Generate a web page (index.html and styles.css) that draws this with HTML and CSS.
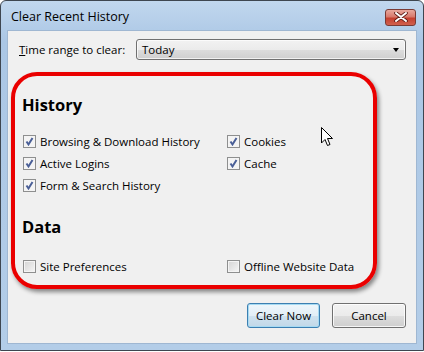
FILE: index.html
```html
<!DOCTYPE html>
<html>
    <head>
        <title>Clear Recent History</title>
        <link rel="stylesheet" href="styles.css">
    </head>
    <body>
        <div class="window">
            <div class="titlebar">
                <span class="title">Clear Recent History</span>
                <span class="close">
                    <svg width="14" height="10" viewBox="0 0 14 10">
                        <path d="M2 1 L12 9 M12 1 L2 9" stroke="#5b1a14" stroke-width="3.6" stroke-linecap="round"/>
                        <path d="M2 1 L12 9 M12 1 L2 9" stroke="#ffffff" stroke-width="2" stroke-linecap="round"/>
                    </svg>
                </span>
            </div>

            <div class="client">
                <div class="range">
                    <label class="range-label"><u>T</u>ime range to clear:</label>
                    <div class="select">
                        <span>Today</span>
                        <span class="arrow"></span>
                    </div>
                </div>

                <div class="marked">
                    <h2>History</h2>
                    <div class="options">
                        <div class="option"><span class="box checked"></span>Browsing &amp; Download History</div>
                        <div class="option"><span class="box checked"></span>Cookies</div>
                        <div class="option"><span class="box checked"></span>Active Logins</div>
                        <div class="option"><span class="box checked"></span>Cache</div>
                        <div class="option"><span class="box checked"></span>Form &amp; Search History</div>
                    </div>

                    <h2 class="data">Data</h2>
                    <div class="options data-options">
                        <div class="option"><span class="box"></span>Site Preferences</div>
                        <div class="option"><span class="box"></span>Offline Website Data</div>
                    </div>
                </div>

                <div class="buttons">
                    <button class="default">Clear Now</button>
                    <button>Cancel</button>
                </div>

                <svg class="cursor" width="13" height="20" viewBox="0 0 13 20">
                    <path d="M0.5 0.5 L0.5 16 L4 12.5 L6.5 18.5 L9 17.5 L6.5 11.5 L11.5 11.5 Z" fill="#ffffff" stroke="#000000" stroke-width="1" stroke-linejoin="miter"/>
                </svg>
            </div>
        </div>
    </body>
</html>
```

FILE: styles.css
```css
html {
    background: #ffffff;
}

body {
    margin: 0;
    font-family: 'Open Sans', 'Noto Sans', sans-serif;
    font-size: 11.5px;
    color: #000000;
}

.window {
    width: 424px;
    height: 351px;
    box-sizing: border-box;
    border: 1px solid #3e4650;
    border-radius: 6px 6px 0 0;
    background: linear-gradient(#c1d7ee, #abc7e5 40px, #b3cde8);
    padding: 0 6px 6px 6px;
    display: flex;
    flex-direction: column;
}

.titlebar {
    height: 29px;
    display: flex;
    align-items: center;
    justify-content: space-between;
    padding: 0 0 0 4px;
}

.title {
    font-size: 12.5px;
    color: #000000;
    padding-top: 2px;
}

.close {
    width: 29px;
    height: 15px;
    border: 1px solid #7a3a34;
    border-radius: 3px;
    background: linear-gradient(#e8a89d, #d87a6d 45%, #c5402f 55%, #d0604e);
    display: flex;
    align-items: center;
    justify-content: center;
    margin-top: 3px;
    margin-right: 1px;
}

.client {
    flex: 1;
    position: relative;
    background: #f0f0f0;
    border: 1px solid #9fb7d2;
    display: flex;
    flex-direction: column;
}

.range {
    display: flex;
    align-items: center;
    margin: 8px 10px 0 11px;
}

.range-label {
    width: 117px;
}

.select {
    flex: 1;
    height: 19px;
    border: 1px solid #707070;
    border-radius: 3px;
    background: linear-gradient(#f2f2f2, #ebebeb 50%, #dddddd 51%, #cfcfcf);
    box-shadow: inset 0 0 0 1px rgba(255, 255, 255, 0.7);
    display: flex;
    align-items: center;
    justify-content: space-between;
    padding: 0 6px 0 5px;
}

.arrow {
    width: 0;
    height: 0;
    border-left: 3.5px solid transparent;
    border-right: 3.5px solid transparent;
    border-top: 4px solid #000000;
}

.marked {
    box-sizing: border-box;
    margin: 12px 0 0 3px;
    width: 366px;
    height: 217px;
    border: 4px solid #ea0000;
    border-radius: 26px;
    box-shadow: 2px 3px 4px rgba(0, 0, 0, 0.45);
    padding: 18px 0 0 7px;
}

h2 {
    margin: 0;
    font-size: 16.5px;
    font-weight: bold;
    line-height: 22px;
}

h2.data {
    margin-top: 20px;
}

.options {
    display: grid;
    grid-template-columns: 204px 1fr;
    grid-auto-rows: 22px;
    margin-top: 14px;
}

.data-options {
    margin-top: 17px;
}

.option {
    display: flex;
    align-items: center;
    padding-left: 1px;
}

.box {
    width: 11px;
    height: 11px;
    border: 1px solid #8e8f8f;
    background: linear-gradient(135deg, #d4d4d4, #f6f6f6);
    box-shadow: inset 0 0 0 1px #f4f4f4;
    margin-right: 4px;
}

.box.checked {
    background: #f4f4f4 url("data:image/svg+xml,%3Csvg xmlns='http://www.w3.org/2000/svg' width='11' height='11'%3E%3Cpath d='M2.5 5.5 L4.5 8.5 L8.5 2' stroke='%234a5f97' stroke-width='2' fill='none'/%3E%3C/svg%3E") no-repeat center;
}

.buttons {
    display: flex;
    justify-content: flex-end;
    gap: 12px;
    margin: 14px 10px 0 0;
}

button {
    width: 74px;
    height: 25px;
    font-family: inherit;
    font-size: 11.5px;
    border: 1px solid #707070;
    border-radius: 3px;
    background: linear-gradient(#f2f2f2, #ebebeb 50%, #dddddd 51%, #cfcfcf);
    box-shadow: inset 0 0 0 1px rgba(255, 255, 255, 0.8);
    padding: 0;
}

button.default {
    width: 73px;
    border-color: #3c7fb1;
    background: linear-gradient(#eef6fb, #e2eef6 50%, #cfe2ef 51%, #c2d8e8);
    box-shadow: inset 0 0 0 1px #a6daf2;
}

.cursor {
    position: absolute;
    left: 313px;
    top: 96px;
}
```
